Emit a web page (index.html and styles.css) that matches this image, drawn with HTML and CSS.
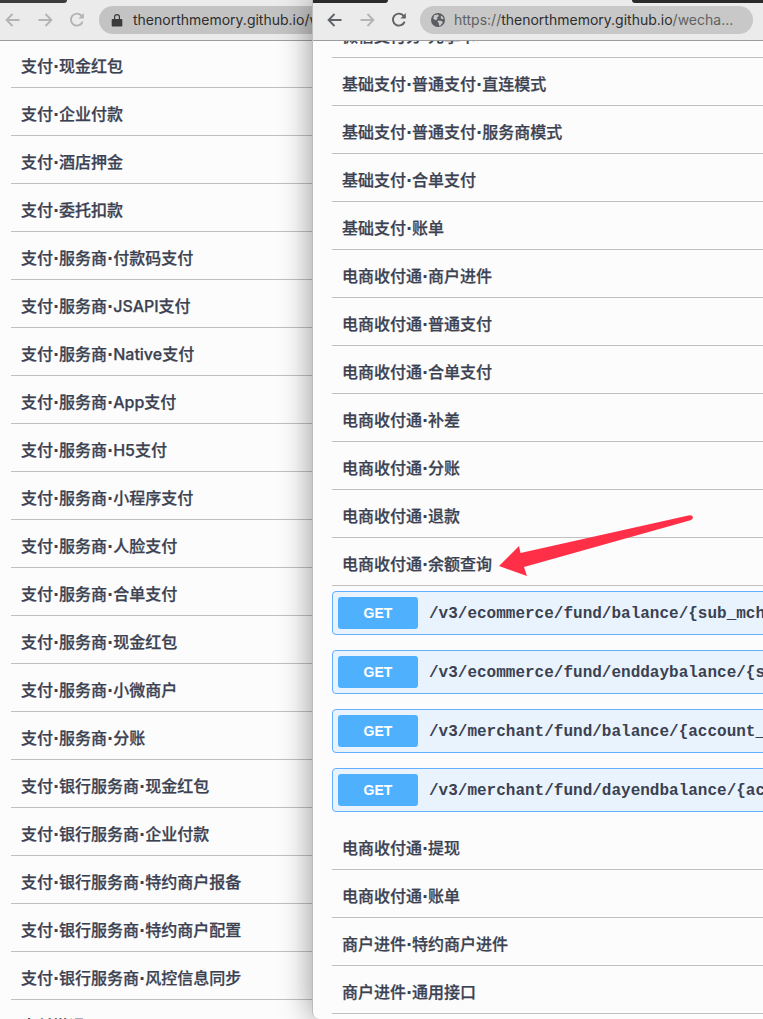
FILE: index.html
```html
<!DOCTYPE html>
<html lang="zh-CN">
<head>
<meta charset="utf-8">
<title>WeChat Pay API</title>
<link rel="stylesheet" href="styles.css">
</head>
<body>
<div class="desktop">
  <section class="window window-back">
    <div class="topstrip"><span class="strip-dark strip-left"></span></div>
    <header class="toolbar">
      <svg class="nav nav-off" width="18" height="18" viewBox="0 0 18 18"><path d="M15.5 9H2.8M8.5 3 2.6 9l5.9 6"/></svg>
      <svg class="nav nav-off" width="18" height="18" viewBox="0 0 18 18"><path d="M2.5 9h12.7M9.5 3l5.900 6-5.900 6"/></svg>
      <svg class="nav nav-off" width="18" height="18" viewBox="0 0 18 18"><path d="M14.6 10.6A6 6 0 1 1 13.4 4.6L15 6.2"/><path class="fill" d="M15.8 2v5.4h-5.4z"/></svg>
      <div class="omnibox omnibox-back">
        <svg class="lock" width="12" height="14" viewBox="0 0 12 14"><path d="M1.500 6h9a.8.8 0 0 1 .8.8v5.900a.8.8 0 0 1-.8.8h-9a.8.8 0 0 1-.8-.8V6.800a.8.8 0 0 1 .8-.8zM3 6V4a3 3 0 0 1 6 0v2H7.800V4a1.800 1.800 0 0 0-3.600 0v2z"/></svg>
        <span class="url">thenorthmemory.github.io/wechatpay</span>
      </div>
    </header>
    <div class="viewport">
      <ul class="list list-back">
        <li class="row">支付<span class="dot">·</span>现金红包</li>
        <li class="row">支付<span class="dot">·</span>企业付款</li>
        <li class="row">支付<span class="dot">·</span>酒店押金</li>
        <li class="row">支付<span class="dot">·</span>委托扣款</li>
        <li class="row">支付<span class="dot">·</span>服务商<span class="dot">·</span>付款码支付</li>
        <li class="row">支付<span class="dot">·</span>服务商<span class="dot">·</span>JSAPI支付</li>
        <li class="row">支付<span class="dot">·</span>服务商<span class="dot">·</span>Native支付</li>
        <li class="row">支付<span class="dot">·</span>服务商<span class="dot">·</span>App支付</li>
        <li class="row">支付<span class="dot">·</span>服务商<span class="dot">·</span>H5支付</li>
        <li class="row">支付<span class="dot">·</span>服务商<span class="dot">·</span>小程序支付</li>
        <li class="row">支付<span class="dot">·</span>服务商<span class="dot">·</span>人脸支付</li>
        <li class="row">支付<span class="dot">·</span>服务商<span class="dot">·</span>合单支付</li>
        <li class="row">支付<span class="dot">·</span>服务商<span class="dot">·</span>现金红包</li>
        <li class="row">支付<span class="dot">·</span>服务商<span class="dot">·</span>小微商户</li>
        <li class="row">支付<span class="dot">·</span>服务商<span class="dot">·</span>分账</li>
        <li class="row">支付<span class="dot">·</span>银行服务商<span class="dot">·</span>现金红包</li>
        <li class="row">支付<span class="dot">·</span>银行服务商<span class="dot">·</span>企业付款</li>
        <li class="row">支付<span class="dot">·</span>银行服务商<span class="dot">·</span>特约商户报备</li>
        <li class="row">支付<span class="dot">·</span>银行服务商<span class="dot">·</span>特约商户配置</li>
        <li class="row">支付<span class="dot">·</span>银行服务商<span class="dot">·</span>风控信息同步</li>
        <li class="row">支付撤退</li>
      </ul>
    </div>
  </section>

  <section class="window window-front">
    <div class="topstrip"><span class="strip-dark strip-a"></span><span class="strip-gap"></span><span class="strip-dark strip-b"></span></div>
    <header class="toolbar">
      <svg class="nav nav-on" width="18" height="18" viewBox="0 0 18 18"><path d="M15.5 9H2.8M8.5 3 2.6 9l5.900 6"/></svg>
      <svg class="nav nav-off" width="18" height="18" viewBox="0 0 18 18"><path d="M2.5 9h12.7M9.5 3l5.900 6-5.900 6"/></svg>
      <svg class="nav nav-on" width="18" height="18" viewBox="0 0 18 18"><path d="M14.6 10.6A6 6 0 1 1 13.4 4.6L15 6.2"/><path class="fill" d="M15.8 2v5.400h-5.400z"/></svg>
      <div class="omnibox omnibox-front">
        <svg class="globe" width="14" height="14" viewBox="0 0 14 14"><circle cx="7" cy="7" r="7"/><path class="land" d="M3.200 2.200 6.800 1.400 8 3 6 4.500 6.600 6 4.600 7.200 2.200 5.400zM7.600 7.400l3.400.6.8 1.800-2.600 3-1.200-.4-.4-2.600-1.200-1.200zM10.200 2.400l1.800 1.800.6 2-2-.2-1-1.600z"/></svg>
        <span class="url"><span class="url-dim">https://</span>thenorthmemory.github.io<span class="url-dim">/wecha...</span></span>
      </div>
    </header>
    <div class="viewport">
      <ul class="list list-front">
        <li class="row">微信支付分<span class="dot">·</span>先享卡</li>
        <li class="row">基础支付<span class="dot">·</span>普通支付<span class="dot">·</span>直连模式</li>
        <li class="row">基础支付<span class="dot">·</span>普通支付<span class="dot">·</span>服务商模式</li>
        <li class="row">基础支付<span class="dot">·</span>合单支付</li>
        <li class="row">基础支付<span class="dot">·</span>账单</li>
        <li class="row">电商收付通<span class="dot">·</span>商户进件</li>
        <li class="row">电商收付通<span class="dot">·</span>普通支付</li>
        <li class="row">电商收付通<span class="dot">·</span>合单支付</li>
        <li class="row">电商收付通<span class="dot">·</span>补差</li>
        <li class="row">电商收付通<span class="dot">·</span>分账</li>
        <li class="row">电商收付通<span class="dot">·</span>退款</li>
        <li class="row">电商收付通<span class="dot">·</span>余额查询</li>
        <li class="ops">
          <div class="op"><span class="method">GET</span><span class="path">/v3/ecommerce/fund/balance/{sub_mchid}</span></div>
          <div class="op"><span class="method">GET</span><span class="path">/v3/ecommerce/fund/enddaybalance/{sub_mchid}</span></div>
          <div class="op"><span class="method">GET</span><span class="path">/v3/merchant/fund/balance/{account_type}</span></div>
          <div class="op"><span class="method">GET</span><span class="path">/v3/merchant/fund/dayendbalance/{account_type}</span></div>
        </li>
        <li class="row">电商收付通<span class="dot">·</span>提现</li>
        <li class="row">电商收付通<span class="dot">·</span>账单</li>
        <li class="row">商户进件<span class="dot">·</span>特约商户进件</li>
        <li class="row">商户进件<span class="dot">·</span>通用接口</li>
      </ul>
    </div>
    <svg class="annotation" width="200" height="64" viewBox="0 0 200 64"><path d="M1 56 21 36 22.500 43 191.500 5.200Q194.500 5 195 7.300 195 9.300 192.500 10.200L26 57 29 66z"/></svg>
  </section>
</div>
</body>
</html>
```

FILE: styles.css
```css
* { box-sizing: border-box; }
html, body { margin: 0; padding: 0; height: 100%; overflow: hidden; background: #fff; }
.desktop { display: flex; width: 763px; height: 1019px; overflow: hidden; }

.window { position: relative; display: flex; flex-direction: column; height: 1019px; background: #fcfcfc; overflow: hidden; }
.window-back { width: 312px; flex: none; }
.window-front { width: 451px; flex: none; z-index: 1; overflow: visible; border-bottom-left-radius: 7px; box-shadow: 0 0 32px rgba(0,0,0,.42); border-left: 1px solid #bdbdbd; }
.window-front .viewport { border-bottom-left-radius: 7px; }

.topstrip { display: flex; height: 3px; flex: none; background: #ebebeb; }
.strip-dark { display: block; height: 3px; background: #2b2a29; }
.strip-left { width: 67px; background: #3c3c3c; border-bottom-right-radius: 4px; }
.strip-a { width: 75px; border-bottom-right-radius: 3px; }
.strip-gap { width: 244px; }
.strip-b { flex: 1; border-bottom-left-radius: 4px; }

.toolbar { display: flex; align-items: center; flex: none; height: 38px; padding-bottom: 3px; background: #ebebeb; border-bottom: 1px solid #9d9d9d; }
.window-back .toolbar { padding-left: 4px; gap: 14px; }
.window-front .toolbar { padding-left: 13px; gap: 14px; }

.nav { flex: none; }
.nav path { fill: none; stroke-width: 1.9; }
.nav .fill { stroke: none; }
.nav-off path { stroke: #b4b4b4; }
.nav-off .fill { fill: #b4b4b4; }
.nav-on path { stroke: #5f6368; }
.nav-on .fill { fill: #5f6368; }

.omnibox { display: flex; align-items: center; height: 28px; flex: none; background: #c8c8c8; font: 400 14px/28px "Inter", "Liberation Sans", sans-serif; white-space: nowrap; overflow: hidden; }
.omnibox-back { width: 240px; margin-left: -1px; padding-left: 12px; gap: 10px; border-radius: 14px 0 0 14px; background: #c3c3c3; }
.omnibox-front { width: 333px; margin-left: -2px; padding-left: 11px; gap: 9px; border-radius: 14px; }
.lock { flex: none; fill: #3a3a3a; }
.globe { flex: none; fill: #5a5d61; }
.globe .land { fill: #c8c8c8; }
.url { color: #2e2e2e; }
.url-dim { color: #616161; }

.viewport { flex: 1; min-height: 0; overflow: hidden; }
.list { list-style: none; margin: 0; padding: 0; font: 500 16px/24px "Inter", "Noto Sans CJK SC", sans-serif; color: #3b4151; }
.list-back { margin-left: 11px; margin-top: -1px; }
.list-front { margin-left: 19px; margin-top: -31px; }
.row { height: 48px; padding: 3px 0 0 10px; line-height: 46px; border-bottom: 1px solid #c0c0c0; white-space: nowrap; -webkit-text-stroke: .25px #3b4151; }
.dot { font-family: "DejaVu Sans", sans-serif; font-weight: 700; -webkit-text-stroke: 0; }

.ops { display: flex; flex-direction: column; gap: 15px; padding: 5px 0 10px; }
.op { display: flex; align-items: center; width: 460px; height: 44px; padding-left: 5px; background: #e8f3fd; border: 1px solid #61affe; border-radius: 4px; white-space: nowrap; }
.method { flex: none; width: 80px; height: 32px; margin-right: 11px; background: #4fb0fd; border-radius: 3px; color: #fff; font: 700 14px/32px "Liberation Sans", sans-serif; text-align: center; }
.path { padding-top: 2px; font: 700 16px/32px "Liberation Mono", monospace; color: #3b4151; }

.annotation { position: absolute; left: 185px; top: 510px; fill: #ff2f48; overflow: visible; z-index: 2; }
```
